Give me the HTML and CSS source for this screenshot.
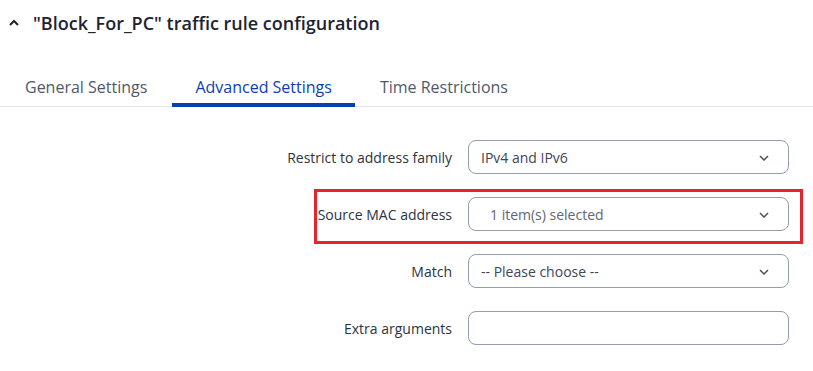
FILE: index.html
```html
<!DOCTYPE html>
<html lang="en">
<head>
    <meta charset="UTF-8">
    <meta name="viewport" content="width=device-width, initial-scale=1.0">
    <title>Traffic rule configuration</title>
    <link rel="stylesheet" href="styles.css">
</head>
<body>
    <div class="panel">
        <h2 class="panel-title">
            <svg class="collapse-icon" width="10" height="7" viewBox="0 0 10 7"><path d="M1 6 L5 2 L9 6" fill="none" stroke="#1e2330" stroke-width="2"/></svg>
            <span>"Block_For_PC" traffic rule configuration</span>
        </h2>

        <div class="tabs">
            <div class="tab">General Settings</div>
            <div class="tab active">Advanced Settings</div>
            <div class="tab">Time Restrictions</div>
        </div>

        <form class="form">
            <div class="form-row">
                <label class="form-label">Restrict to address family</label>
                <div class="select">
                    <span>IPv4 and IPv6</span>
                    <svg class="chevron" width="10" height="6" viewBox="0 0 10 6"><path d="M1 1 L5 5 L9 1" fill="none" stroke="#4a5160" stroke-width="1.5"/></svg>
                </div>
            </div>
            <div class="form-row highlight">
                <label class="form-label">Source MAC address</label>
                <div class="select multi">
                    <span>1 item(s) selected</span>
                    <svg class="chevron" width="10" height="6" viewBox="0 0 10 6"><path d="M1 1 L5 5 L9 1" fill="none" stroke="#4a5160" stroke-width="1.5"/></svg>
                </div>
            </div>
            <div class="form-row">
                <label class="form-label">Match</label>
                <div class="select">
                    <span>-- Please choose --</span>
                    <svg class="chevron" width="10" height="6" viewBox="0 0 10 6"><path d="M1 1 L5 5 L9 1" fill="none" stroke="#4a5160" stroke-width="1.5"/></svg>
                </div>
            </div>
            <div class="form-row">
                <label class="form-label">Extra arguments</label>
                <input type="text" class="text-input">
            </div>
        </form>
    </div>
</body>
</html>
```

FILE: styles.css
```css
body {
    margin: 0;
    font-family: 'Open Sans', 'Noto Sans', sans-serif;
    background: white;
    color: #2d3340;
}
.panel {
    width: 813px;
}
.panel-title {
    margin: 0;
    padding: 11px 0 0 9px;
    display: flex;
    align-items: center;
    font-size: 18px;
    font-weight: 600;
    line-height: 24px;
    color: #1e2330;
}
.collapse-icon {
    margin-right: 14px;
    margin-top: -2px;
}
.tabs {
    display: flex;
    gap: 2px;
    margin-top: 41px;
    padding-left: 2px;
    border-bottom: 1px solid #e2e5ea;
}
.tab {
    padding: 0 23px 5px;
    font-size: 16px;
    line-height: 22px;
    color: #4f5868;
    border-bottom: 4px solid transparent;
    margin-bottom: -1px;
}
.tab.active {
    color: #0a3fb3;
    border-bottom-color: #0a3fb3;
}
.form {
    padding: 33px 24px 0 0;
}
.form-row {
    display: grid;
    grid-template-columns: 1fr 321px;
    column-gap: 16px;
    align-items: center;
    margin-bottom: 23px;
    position: relative;
}
.form-row.highlight::after {
    content: "";
    position: absolute;
    left: 314px;
    right: -14px;
    top: -8px;
    bottom: -13px;
    border: 3px solid #e3262b;
    pointer-events: none;
}
.form-label {
    text-align: right;
    font-size: 14px;
    color: #2d3340;
}
.select {
    height: 34px;
    box-sizing: border-box;
    border: 1px solid #939db0;
    border-radius: 8px;
    display: flex;
    align-items: center;
    justify-content: space-between;
    padding: 0 19px 0 12px;
    font-size: 14px;
    color: #3e4555;
}
.select.multi {
    padding-left: 21px;
    color: #5f6675;
}
.chevron {
    margin-top: 1px;
}
.text-input {
    height: 34px;
    box-sizing: border-box;
    border: 1px solid #939db0;
    border-radius: 8px;
    width: 100%;
    margin: 0;
}
```
